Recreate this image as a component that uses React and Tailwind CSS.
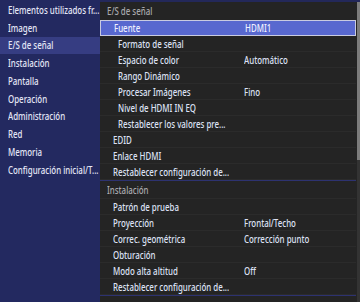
import React from 'react';

// Menú lateral de la izquierda
const mainMenu = [
  'Elementos utilizados fr...',
  'Imagen',
  'E/S de señal',
  'Instalación',
  'Pantalla',
  'Operación',
  'Administración',
  'Red',
  'Memoria',
  'Configuración inicial/T...',
];

// Filas del panel derecho: level 1 = elemento, level 2 = sub-elemento
const signalRows = [
  { label: 'Fuente', value: 'HDMI1', level: 1, selected: true },
  { label: 'Formato de señal', level: 2 },
  { label: 'Espacio de color', value: 'Automático', level: 2 },
  { label: 'Rango Dinámico', level: 2 },
  { label: 'Procesar Imágenes', value: 'Fino', level: 2 },
  { label: 'Nivel de HDMI IN EQ', level: 2 },
  { label: 'Restablecer los valores pre...', level: 2 },
  { label: 'EDID', level: 1 },
  { label: 'Enlace HDMI', level: 1 },
  { label: 'Restablecer configuración de...', level: 1 },
];

const installRows = [
  { label: 'Patrón de prueba', level: 1 },
  { label: 'Proyección', value: 'Frontal/Techo', level: 1 },
  { label: 'Correc. geométrica', value: 'Corrección punto', level: 1 },
  { label: 'Obturación', level: 1 },
  { label: 'Modo alta altitud', value: 'Off', level: 1 },
  { label: 'Restablecer configuración de...', level: 1 },
];

// El texto del proyector es estrecho: se comprime en horizontal
const Txt = ({ children }) => (
  <span className="inline-block whitespace-nowrap origin-left scale-x-[0.79]">{children}</span>
);

const Row = ({ row }) => (
  <div
    className={`flex items-center h-[16px] shrink-0 border-b ${
      row.selected
        ? 'bg-[#5868cf] border border-[#c9cbe0] text-[#eef0ff] -mt-px'
        : 'border-[#2b2b2b] text-[#dde1f4]'
    }`}
  >
    <div className={`w-[144px] shrink-0 ${row.level === 2 ? 'pl-[18px]' : 'pl-[13px]'}`}>
      <Txt>{row.label}</Txt>
    </div>
    {row.value && <Txt>{row.value}</Txt>}
  </div>
);

export default function App() {
  return (
    <div
      className="flex w-[360px] h-[302px] overflow-hidden bg-[#242424] text-[10px] font-medium leading-[12px]"
      style={{ fontFamily: '"Noto Sans", "Open Sans", sans-serif' }}
    >
      {/* Panel izquierdo */}
      <div className="w-[100px] shrink-0 bg-[#232960] pt-[1px] flex flex-col">
        {mainMenu.map((item, i) => (
          <div
            key={item}
            className={`h-[17.75px] shrink-0 flex items-center pl-[8px] text-[#e3e6f6] ${
              i === 2 ? 'bg-[#363d82]' : ''
            }`}
          >
            <Txt>{item}</Txt>
          </div>
        ))}
      </div>

      {/* Panel derecho */}
      <div className="flex-1 flex flex-col relative">
        <div className="h-[2px] bg-[#23285a] shrink-0" />
        <div className="h-[19px] shrink-0 flex items-center pl-[7px] text-[#a9a9ad] border-b border-[#2b2b2b]">
          <Txt>E/S de señal</Txt>
        </div>
        <div className="pr-[4px] flex flex-col">
          {signalRows.map((row) => (
            <Row key={row.label} row={row} />
          ))}
        </div>
        <div className="h-px bg-[#2d3270] shrink-0 mr-[4px]" />
        <div className="h-[18px] shrink-0 flex items-center pl-[7px] text-[#a9a9ad] border-b border-[#2b2b2b] mr-[4px]">
          <Txt>Instalación</Txt>
        </div>
        <div className="pr-[4px] flex flex-col">
          {installRows.map((row, i) => (
            <Row key={row.label + i} row={row} />
          ))}
        </div>
        <div className="h-px bg-[#2d3270] shrink-0 mr-[4px]" />

        {/* Barra de desplazamiento */}
        <div className="absolute right-0 top-[2px] bottom-0 w-[3px] bg-[#333333]">
          <div className="h-[158px] bg-[#7c7c7c]" />
        </div>
      </div>
    </div>
  );
}
